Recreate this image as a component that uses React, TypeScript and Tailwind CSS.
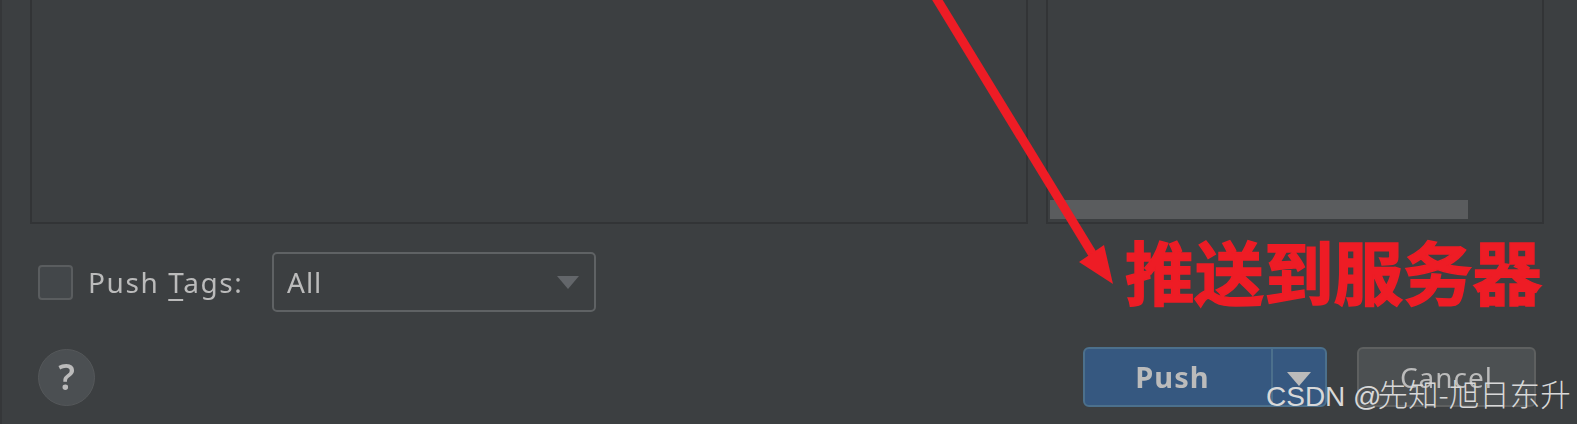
export default function App() {
  return (
    <div className="relative w-[1577px] h-[424px] overflow-hidden bg-[#3c3f41] font-['Noto_Sans','Noto_Sans_CJK_SC',sans-serif]">
      <div className="absolute left-0 top-0 h-full w-[2px] bg-[#353739]" />
      <div className="flex h-[224px] pl-[30px]">
        <div className="w-[998px] border-2 border-t-0 border-[#323436]" />
        <div className="ml-[18px] w-[498px] border-2 border-t-0 border-[#323436] flex flex-col justify-end pb-[3px] pl-[2px]">
          <div className="w-[418px] h-[19px] bg-[#5a5c5e]" />
        </div>
      </div>

      <div className="flex items-center h-[60px] mt-[28px] pl-[38px]">
        <div className="w-[35px] h-[35px] rounded-[4px] border-2 border-[#5a5d5f] bg-[#43474a]" />
        <span className="ml-[15px] w-[184px] text-[28px] tracking-[1.6px] leading-none text-[#bbbbbb] blur-[0.5px]">
          Push <span className="underline underline-offset-[6px]">T</span>ags:
        </span>
        <div className="w-[324px] h-[60px] rounded-[5px] border-2 border-[#5f6264] flex items-center justify-between pl-[13px] pr-[15px] text-[28px] tracking-[1px] text-[#bbbbbb]">
          <span className="blur-[0.5px]">All</span>
          <div className="w-0 h-0 border-x-[11px] border-x-transparent border-t-[13px] border-t-[#63666a] blur-[0.5px]" />
        </div>
      </div>

      <div className="flex items-center h-[60px] mt-[35px] pl-[38px] pr-[41px]">
        <div className="w-[57px] h-[57px] rounded-full bg-[#4b4f52] border border-[#55585a] flex items-center justify-center text-[36px] font-semibold text-[#bbbbbb] blur-[0.5px]">?</div>
        <div className="ml-auto w-[244px] h-[60px] rounded-[6px] bg-[#365880] border-2 border-[#4c708c] flex items-center">
          <span className="w-[186px] text-center text-[29px] font-bold tracking-[1px] pr-[11px] text-[#bbbbbb] blur-[0.5px]">Push</span>
          <div className="h-full w-[2px] bg-[#4c708c]" />
          <div className="flex-1 flex justify-center">
            <div className="w-0 h-0 mt-[4px] border-x-[12px] border-x-transparent border-t-[14px] border-t-[#bbbbbb] blur-[0.5px]" />
          </div>
        </div>
        <div className="ml-[30px] w-[179px] h-[60px] rounded-[6px] bg-[#4c5052] border-2 border-[#5e6060] flex items-center justify-center text-[28px] tracking-[1px] text-[#bbbbbb]">
          <span className="blur-[0.5px]">Cancel</span>
        </div>
      </div>

      <svg className="absolute left-0 top-0 pointer-events-none" width="1577" height="424" viewBox="0 0 1577 424">
        <line x1="935" y1="-4" x2="1101" y2="268" stroke="#ee1c25" strokeWidth="9" />
        <polygon points="1113,284 1079,262 1104,245" fill="#ee1c25" />
      </svg>

      <div className="absolute left-[1125px] top-[225px] text-[69.5px] leading-[96px] font-bold [-webkit-text-stroke:1.5px_#ee1c25] text-[#ee1c25] whitespace-nowrap">
        推送到服务器
      </div>

      <div className="absolute left-[1266px] top-[375px] text-[28px] leading-[36px] text-[#d8d8d8] whitespace-nowrap font-['Liberation_Sans','Noto_Sans_CJK_SC',sans-serif]">
        CSDN @<span className="-ml-[4px] text-[30.5px] font-light font-['Noto_Sans_CJK_SC',sans-serif]">先知-旭日东升</span>
      </div>
    </div>
  );
}
